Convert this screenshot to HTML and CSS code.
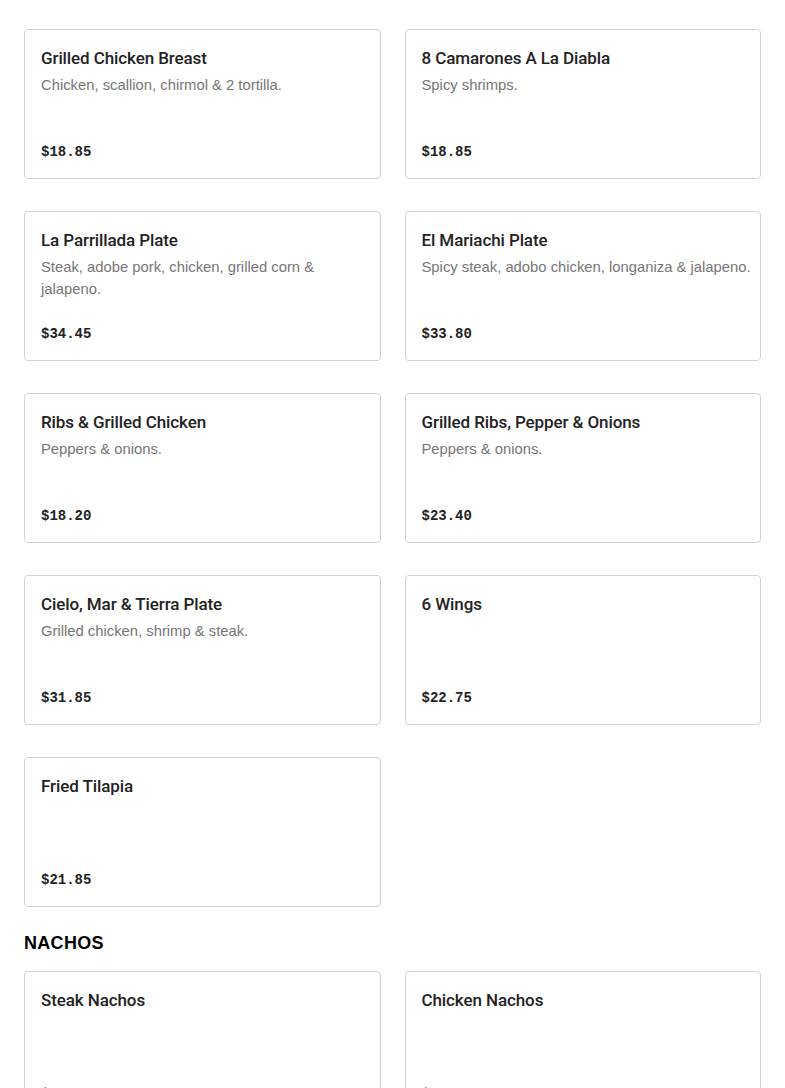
FILE: index.html
```html
<!DOCTYPE html>
<html lang="en">

<head>
    <meta charset="UTF-8" />
    <meta name="viewport" content="width=device-width, initial-scale=1.0" />
    <link rel="stylesheet" href="styles.css">
    <title>Menu</title>
</head>

<body>
    <section class="menu-section">
        <div class="menu-grid">
            <div class="item">
                <h4 class="item-name">Grilled Chicken Breast</h4>
                <p class="item-desc">Chicken, scallion, chirmol &amp; 2 tortilla.</p>
                <span class="item-price">$18.85</span>
            </div>
            <div class="item">
                <h4 class="item-name">8 Camarones A La Diabla</h4>
                <p class="item-desc">Spicy shrimps.</p>
                <span class="item-price">$18.85</span>
            </div>
            <div class="item">
                <h4 class="item-name">La Parrillada Plate</h4>
                <p class="item-desc">Steak, adobe pork, chicken, grilled corn &amp; jalapeno.</p>
                <span class="item-price">$34.45</span>
            </div>
            <div class="item">
                <h4 class="item-name">El Mariachi Plate</h4>
                <p class="item-desc">Spicy steak, adobo chicken, longaniza &amp; jalapeno.</p>
                <span class="item-price">$33.80</span>
            </div>
            <div class="item">
                <h4 class="item-name">Ribs &amp; Grilled Chicken</h4>
                <p class="item-desc">Peppers &amp; onions.</p>
                <span class="item-price">$18.20</span>
            </div>
            <div class="item">
                <h4 class="item-name">Grilled Ribs, Pepper &amp; Onions</h4>
                <p class="item-desc">Peppers &amp; onions.</p>
                <span class="item-price">$23.40</span>
            </div>
            <div class="item">
                <h4 class="item-name">Cielo, Mar &amp; Tierra Plate</h4>
                <p class="item-desc">Grilled chicken, shrimp &amp; steak.</p>
                <span class="item-price">$31.85</span>
            </div>
            <div class="item">
                <h4 class="item-name">6 Wings</h4>
                <span class="item-price">$22.75</span>
            </div>
            <div class="item">
                <h4 class="item-name">Fried Tilapia</h4>
                <span class="item-price">$21.85</span>
            </div>
        </div>
    </section>

    <section class="menu-section">
        <h3 class="section-title">NACHOS</h3>
        <div class="menu-grid">
            <div class="item">
                <h4 class="item-name">Steak Nachos</h4>
                <span class="item-price">$15.60</span>
            </div>
            <div class="item">
                <h4 class="item-name">Chicken Nachos</h4>
                <span class="item-price">$14.30</span>
            </div>
        </div>
    </section>
</body>

</html>
```

FILE: styles.css
```css
:root {
    --text-color: #222222;
    --muted: #767676;
    --border-color: #d3d3d3;
}

body {
    margin: 0;
    padding: 29px 24px 0;
    background: #ffffff;
    color: var(--text-color);
    font-family: "Liberation Sans", Arial, sans-serif;
}

.menu-section {
    margin-bottom: 24px;
}

.section-title {
    margin: 0 0 16px;
    font-size: 18px;
    line-height: 24px;
    font-weight: 700;
    color: #000;
    letter-spacing: 0.3px;
}

.menu-grid {
    display: grid;
    grid-template-columns: 1fr 1fr;
    gap: 32px 24px;
}

.item {
    display: flex;
    flex-direction: column;
    box-sizing: border-box;
    height: 150px;
    padding: 16px 8px 16px 16px;
    border: 1px solid var(--border-color);
    border-radius: 4px;
}

.item-name {
    margin: 0;
    font-family: Roboto, "Liberation Sans", sans-serif;
    font-size: 17px;
    line-height: 24px;
    font-weight: 500;
    letter-spacing: -0.1px;
}

.item-desc {
    margin: 4px 0 0;
    font-size: 14.8px;
    line-height: 22px;
    color: var(--muted);
}

.item-price {
    margin-top: auto;
    font-family: "Liberation Mono", monospace;
    font-size: 14px;
    line-height: 20px;
    font-weight: 700;
}
```
